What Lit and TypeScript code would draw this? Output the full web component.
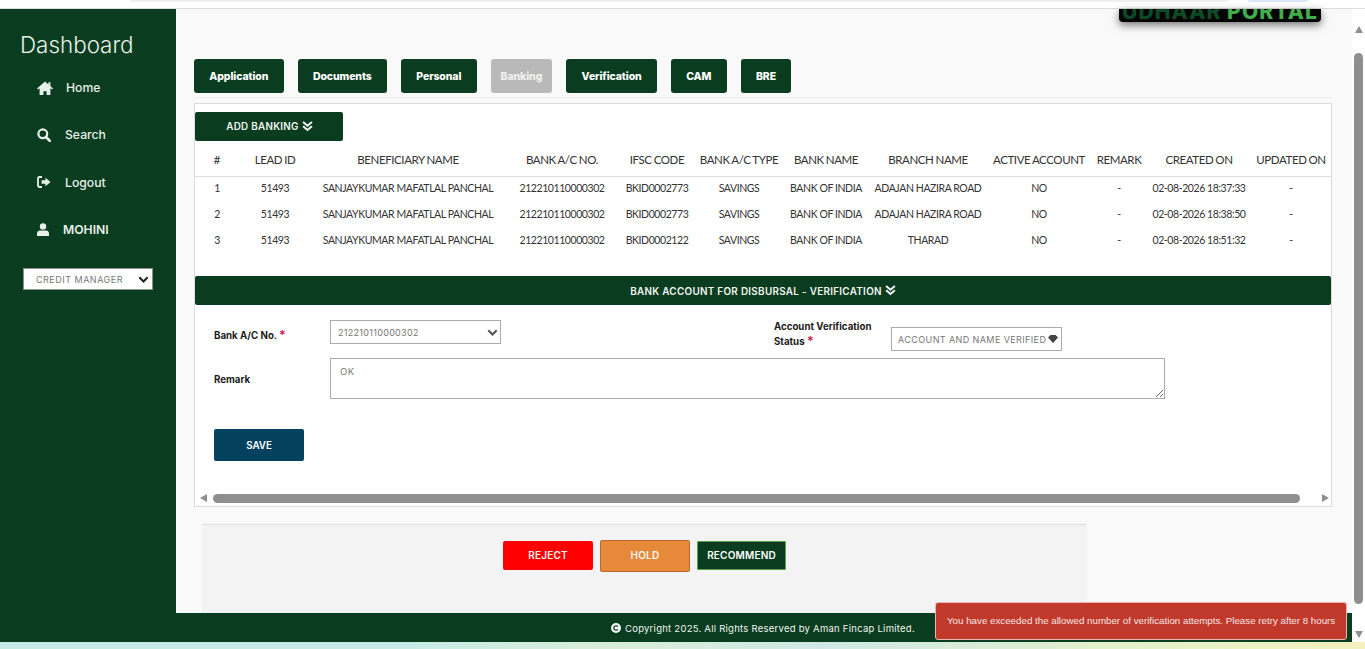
import { LitElement, css, html, svg } from "lit";
import { customElement } from "lit/decorators.js";

const HEAD = [
  "#",
  "LEAD ID",
  "BENEFICIARY NAME",
  "BANK A/C NO.",
  "IFSC CODE",
  "BANK A/C TYPE",
  "BANK NAME",
  "BRANCH NAME",
  "ACTIVE ACCOUNT",
  "REMARK",
  "CREATED ON",
  "UPDATED ON",
];

const WIDTHS = [44, 72, 194, 114, 76, 88, 86, 118, 104, 56, 104, 80];

const ROWS = [
  ["1", "51493", "SANJAYKUMAR MAFATLAL PANCHAL", "212210110000302", "BKID0002773", "SAVINGS", "BANK OF INDIA", "ADAJAN HAZIRA ROAD", "NO", "-", "02-08-2026 18:37:33", "-"],
  ["2", "51493", "SANJAYKUMAR MAFATLAL PANCHAL", "212210110000302", "BKID0002773", "SAVINGS", "BANK OF INDIA", "ADAJAN HAZIRA ROAD", "NO", "-", "02-08-2026 18:38:50", "-"],
  ["3", "51493", "SANJAYKUMAR MAFATLAL PANCHAL", "212210110000302", "BKID0002122", "SAVINGS", "BANK OF INDIA", "THARAD", "NO", "-", "02-08-2026 18:51:32", "-"],
];

const TABS = ["Application", "Documents", "Personal", "Banking", "Verification", "CAM", "BRE"];

const doubleDown = svg`<svg class="dbl" viewBox="0 0 12 12" width="11" height="11"><path d="M1.2 1.2 6 5.2l4.8-4M1.2 5.8 6 9.8l4.8-4" fill="none" stroke="currentColor" stroke-width="2.2"/></svg>`;

const chevron = svg`<svg class="chev" viewBox="0 0 12 8" width="11" height="7"><path d="M1.2 1.5 6 6.2l4.8-4.7" fill="none" stroke="currentColor" stroke-width="2.4"/></svg>`;

const NAV = [
  {
    label: "Home",
    cls: "home",
    icon: svg`<svg viewBox="0 0 16 14" width="16" height="14"><path fill="currentColor" d="M8 .4 0 7.4l1 1.2 1.6-1.3V14h3.8v-3.8h3.2V14h3.8V7.3l1.6 1.3 1-1.2-2.6-2.3V1.2h-2v2.4z"/></svg>`,
  },
  {
    label: "Search",
    cls: "search",
    icon: svg`<svg viewBox="0 0 14 14" width="14" height="14"><circle cx="5.8" cy="5.8" r="4.4" fill="none" stroke="currentColor" stroke-width="2.2"/><path d="m9 9 4 4" stroke="currentColor" stroke-width="2.6" stroke-linecap="round"/></svg>`,
  },
  {
    label: "Logout",
    cls: "logout",
    icon: svg`<svg viewBox="0 0 14 12" width="14" height="12"><path fill="none" stroke="currentColor" stroke-width="1.8" d="M5 1H2.4C1.6 1 1 1.6 1 2.4v7.2c0 .8.6 1.4 1.4 1.4H5"/><path fill="currentColor" d="M8.4 1.8 13.6 6l-5.2 4.2V7.8H4.6V4.2h3.8z"/></svg>`,
  },
  {
    label: "MOHINI",
    cls: "user",
    icon: svg`<svg viewBox="0 0 12 13" width="12" height="13"><circle cx="6" cy="3.4" r="3.2" fill="currentColor"/><path fill="currentColor" d="M0 13v-2.4C0 8.6 1.4 7.4 3 7.4h6c1.6 0 3 1.2 3 3.2V13z"/></svg>`,
  },
];

@customElement("app-root")
export class AppRoot extends LitElement {
  static styles = css`
    :host {
      display: block;
      width: 1365px;
      height: 649px;
      overflow: hidden;
      position: relative;
      background: #fff;
      font-family: "Inter", "Liberation Sans", sans-serif;
    }

    .chrome {
      height: 8px;
      background: #fff;
      border-bottom: 1px solid #dedede;
      display: flex;
      align-items: flex-start;
      gap: 20px;
      padding-left: 130px;
      box-sizing: content-box;
    }
    .chrome .pill {
      width: 1098px;
      height: 2px;
      background: #efefef;
      border-radius: 0 0 6px 6px;
    }
    .chrome .pill.blue {
      width: 60px;
      background: #dce8fa;
    }

    .shell {
      display: flex;
      height: 633px;
    }

    .side {
      width: 176px;
      flex: none;
      background: #0a3d1f;
      color: #e8f0ea;
      display: flex;
      flex-direction: column;
    }
    .brand {
      font-size: 22.4px;
      font-weight: 300;
      line-height: 28px;
      padding: 22px 0 0 20px;
    }
    .nav {
      display: flex;
      flex-direction: column;
      margin-top: 5px;
    }
    .nav-item {
      height: 47.33px;
      display: flex;
      align-items: center;
      padding-left: 37px;
      font-size: 12.2px;
      font-weight: 500;
      color: #e8f0ea;
    }
    .nav-item svg {
      display: block;
    }
    .nav-item .ico {
      width: 29px;
      flex: none;
    }
    .nav-item.search .ico,
    .nav-item.logout .ico {
      width: 28px;
    }
    .nav-item.user .ico {
      width: 26px;
    }
    .nav-item.user {
      font-weight: 600;
    }
    .role {
      position: relative;
      margin: 15px 0 0 23px;
      width: 130px;
      height: 22px;
    }
    .role select {
      appearance: none;
      display: block;
      width: 100%;
      height: 100%;
      box-sizing: border-box;
      border: 1px solid #8f8f8f;
      border-radius: 0;
      background: #fff;
      color: #777;
      font: 400 9px "Inter", sans-serif;
      letter-spacing: 0.5px;
      padding: 0 0 0 12px;
    }
    .chev {
      position: absolute;
      color: #555;
      pointer-events: none;
    }
    .role .chev {
      right: 4px;
      top: 8px;
      color: #222;
    }

    .center {
      flex: 1;
      display: flex;
      flex-direction: column;
      min-width: 0;
    }

    .work {
      flex: none;
      height: 604px;
      background: #f9f9f9;
      position: relative;
      display: flex;
      flex-direction: column;
      padding-left: 18px;
      box-sizing: border-box;
    }

    .logo {
      position: absolute;
      top: 0;
      left: 943px;
      width: 202px;
      height: 13px;
      background: #050505;
      border-radius: 0 0 4px 4px;
      box-shadow: 0 3px 8px rgba(0, 0, 0, 0.55);
      overflow: hidden;
      white-space: nowrap;
      font: 800 21px/13px "Inter", sans-serif;
      letter-spacing: 1.1px;
      text-align: center;
      color: #0f4a27;
    }
    .logo span {
      display: block;
      margin-top: -4px;
    }
    .logo b {
      color: #41ad4b;
      font-weight: 800;
    }

    .tabs {
      display: flex;
      gap: 14px;
      margin-top: 50px;
      padding-bottom: 4px;
      border-bottom: 1px solid #ececec;
      width: 1138px;
    }
    .tab {
      height: 34px;
      padding: 0 15.3px;
      border: 0;
      border-radius: 3px;
      background: #0a3d1f;
      color: #fff;
      font: 800 10.5px "Inter", sans-serif;
      letter-spacing: -0.1px;
    }
    .tab.off {
      padding: 0 10px;
      background: #b9b9b9;
      color: #f1f1f1;
    }

    .card {
      width: 1138px;
      height: 404px;
      margin-top: 5px;
      box-sizing: border-box;
      border: 1px solid #dcdcdc;
      background: #fff;
      display: flex;
      flex-direction: column;
      padding-top: 8px;
    }
    .add {
      width: 148px;
      height: 29px;
      border: 0;
      border-radius: 2px;
      background: #0a3d1f;
      color: #f2f5f2;
      font: 600 9.8px "Inter", sans-serif;
      letter-spacing: 0.3px;
      display: flex;
      align-items: center;
      justify-content: center;
      gap: 3px;
      padding: 0 0 0 1px;
    }

    table {
      table-layout: fixed;
      border-collapse: collapse;
      width: 1136px;
      font-family: "Lato", sans-serif;
      color: #333;
    }
    th {
      height: 35px;
      padding: 3px 0 0;
      box-sizing: border-box;
      font-size: 11.5px;
      font-weight: 400;
      letter-spacing: -0.4px;
      word-spacing: -0.5px;
      white-space: nowrap;
      border-bottom: 1px solid #dcdcdc;
      text-align: center;
    }
    td {
      height: 26px;
      padding: 0 0 2px;
      box-sizing: border-box;
      font-size: 10.5px;
      letter-spacing: -0.42px;
      white-space: nowrap;
      text-align: center;
    }

    .section {
      margin-top: 22px;
      height: 29px;
      flex: none;
      border-radius: 2px;
      background: #0a3d1f;
      color: #f2f5f2;
      font: 600 9.9px "Inter", sans-serif;
      letter-spacing: 0.3px;
      display: flex;
      align-items: center;
      justify-content: center;
      gap: 3px;
    }

    .form {
      display: grid;
      grid-template-columns: 116px 171px 273px 117px 171px;
      grid-template-rows: 32px auto;
      row-gap: 7px;
      padding: 14px 0 0 19px;
      font-size: 9.7px;
      font-weight: 700;
      color: #1c1c1c;
    }
    .form label {
      align-self: center;
      line-height: 15px;
      padding-top: 1px;
    }
    .form label.top {
      align-self: start;
      padding-top: 0;
    }
    .req {
      color: #e0134f;
      font-size: 12px;
      line-height: 10px;
    }
    .pick {
      position: relative;
      height: 24px;
      width: 171px;
    }
    .pick.first {
      margin-top: 1px;
    }
    .pick.last {
      align-self: end;
    }
    .pick select {
      appearance: none;
      display: block;
      width: 100%;
      height: 100%;
      box-sizing: border-box;
      border: 1px solid #ababab;
      border-radius: 0;
      background: #fff;
      color: #777;
      font: 400 9px "Inter", sans-serif;
      letter-spacing: 0.3px;
      padding: 1px 0 0 7px;
    }
    .pick.last select {
      letter-spacing: 0.4px;
      padding: 0 0 0 6px;
    }
    .pick .chev {
      right: 3px;
      top: 9px;
    }
    .pick .stack {
      position: absolute;
      right: 4px;
      top: 8px;
      color: #444;
    }
    .remark {
      grid-column: 2 / -1;
      width: 835px;
      height: 41px;
      box-sizing: border-box;
      display: block;
      border: 1px solid #ababab;
      border-radius: 0;
      padding: 7px 9px 5px;
      color: #777;
      font: 400 9.5px "Inter", sans-serif;
      letter-spacing: 0.5px;
      resize: both;
      outline: 0;
    }

    .save {
      width: 90px;
      height: 32px;
      margin: 30px 0 0 19px;
      padding: 1px 0 0;
      border: 0;
      border-radius: 2px;
      background: #04415f;
      color: #fff;
      font: 600 9.8px "Inter", sans-serif;
      flex: none;
    }

    .hbar {
      margin-top: auto;
      height: 10px;
      margin-bottom: 3px;
      display: flex;
      align-items: center;
      padding: 0 2px 0 5px;
      gap: 6px;
    }
    .arrow {
      flex: none;
      width: 0;
      height: 0;
      border-style: solid;
      border-color: transparent;
    }
    .arrow.left {
      border-width: 4.5px 7px 4.5px 0;
      border-right-color: #8f8f8f;
    }
    .arrow.right {
      border-width: 4.5px 0 4.5px 7px;
      border-left-color: #8f8f8f;
      margin-left: 16px;
    }
    .thumb {
      height: 9px;
      flex: 1;
      border-radius: 5px;
      background: #8f8f8f;
    }

    .actions {
      width: 885px;
      height: 89px;
      margin: 17px 0 0 8px;
      box-sizing: border-box;
      border-top: 1px solid #dedede;
      background: #f3f3f3;
      display: flex;
      align-items: flex-start;
      gap: 7px;
      padding: 15px 0 0 301px;
    }
    .act {
      width: 90px;
      height: 29px;
      margin-top: 1px;
      padding: 0 0 2px;
      box-sizing: border-box;
      border: 0;
      border-radius: 2px;
      color: #f5f5f5;
      font: 600 10px "Inter", sans-serif;
      letter-spacing: 0.2px;
    }
    .act.reject {
      background: #ff0000;
    }
    .act.hold {
      height: 32px;
      margin-top: 0;
      padding-bottom: 2px;
      background: #e68a3a;
      border: 1px solid #b8682a;
    }
    .act.rec {
      width: 89px;
      background: #0a3d1f;
      border: 1px solid #5d9e4a;
      border-radius: 1px;
      color: #fff;
    }

    footer {
      flex: none;
      height: 29px;
      box-sizing: border-box;
      padding: 1px 0 0 435px;
      background: #0a3d1f;
      color: #f0f4f0;
      display: flex;
      align-items: center;
      gap: 4px;
      font: 400 9.5px "Inter", sans-serif;
      letter-spacing: 0.25px;
    }

    .vbar {
      width: 13px;
      flex: none;
      background: #fff;
      display: flex;
      flex-direction: column;
      align-items: center;
      padding: 17px 0 4px;
      box-sizing: border-box;
      position: relative;
    }
    .vbar .up,
    .vbar .down {
      width: 0;
      height: 0;
      border-style: solid;
      border-color: transparent;
      flex: none;
    }
    .vbar .up {
      border-width: 0 4.5px 7px;
      border-bottom-color: #8f8f8f;
    }
    .vbar .grip {
      flex: none;
      width: 9px;
      height: 551px;
      margin-top: 20px;
      border-radius: 5px;
      background: #8f8f8f;
    }
    .vbar .down {
      margin-top: auto;
      border-width: 7px 4.5px 0;
      border-top-color: #8f8f8f;
    }

    .wash {
      height: 7px;
      background: linear-gradient(90deg, #c4ebe6 0%, #c7ebe6 30%, #d9eed8 45%, #cfe8e4 60%, #e6f1c8 85%, #f4f0bf 100%);
    }

    .toast {
      position: absolute;
      left: 935px;
      top: 602px;
      width: 412px;
      height: 38px;
      box-sizing: border-box;
      display: flex;
      align-items: center;
      padding: 0 0 2px 11px;
      border: 1px solid #e7b7b0;
      border-radius: 3px;
      background: #c0392b;
      color: #f6e6e3;
      font: 400 9.75px "Liberation Sans", sans-serif;
      white-space: nowrap;
    }
  `;

  render() {
    return html`
      <div class="chrome">
        <div class="pill"></div>
        <div class="pill blue"></div>
      </div>
      <div class="shell">
        <aside class="side">
          <div class="brand">Dashboard</div>
          <nav class="nav">
            ${NAV.map(
              (n) => html`<div class="nav-item ${n.cls}"><span class="ico">${n.icon}</span>${n.label}</div>`,
            )}
          </nav>
          <div class="role">
            <select><option>CREDIT MANAGER</option></select>
            ${chevron}
          </div>
        </aside>

        <div class="center">
          <main class="work">
            <div class="logo"><span>UDHAAR <b>PORTAL</b></span></div>
            <div class="tabs">
              ${TABS.map((t) => html`<button class="tab ${t === "Banking" ? "off" : ""}">${t}</button>`)}
            </div>
            <section class="card">
              <button class="add">ADD BANKING ${doubleDown}</button>
              <table>
                <colgroup>
                  ${WIDTHS.map((w) => html`<col style="width:${w}px" />`)}
                </colgroup>
                <thead>
                  <tr>${HEAD.map((h) => html`<th>${h}</th>`)}</tr>
                </thead>
                <tbody>
                  ${ROWS.map((r) => html`<tr>${r.map((c) => html`<td>${c}</td>`)}</tr>`)}
                </tbody>
              </table>
              <div class="section">BANK ACCOUNT FOR DISBURSAL - VERIFICATION ${doubleDown}</div>
              <div class="form">
                <label>Bank A/C No. <span class="req">*</span></label>
                <div class="pick first">
                  <select><option>212210110000302</option></select>
                  ${chevron}
                </div>
                <div></div>
                <label class="top">Account Verification<br />Status <span class="req">*</span></label>
                <div class="pick last">
                  <select><option>ACCOUNT AND NAME VERIFIED</option></select>
                  <svg class="stack" viewBox="0 0 10 8" width="10" height="8">
                    <path fill="currentColor" d="M0 2.4 2.4 0h5.2L10 2.4 5 8z" />
                  </svg>
                </div>
                <label>Remark</label>
                <textarea class="remark">OK</textarea>
              </div>
              <button class="save">SAVE</button>
              <div class="hbar">
                <span class="arrow left"></span>
                <span class="thumb"></span>
                <span class="arrow right"></span>
              </div>
            </section>
            <div class="actions">
              <button class="act reject">REJECT</button>
              <button class="act hold">HOLD</button>
              <button class="act rec">RECOMMEND</button>
            </div>
          </main>
          <footer>
            <svg viewBox="0 0 10 10" width="10" height="10">
              <circle cx="5" cy="5" r="5" fill="currentColor" />
              <path d="M6.8 3.7A2.2 2.2 0 1 0 6.8 6.3" fill="none" stroke="#0a3d1f" stroke-width="1.3" />
            </svg>
            <span>Copyright 2025. All Rights Reserved by Aman Fincap Limited.</span>
          </footer>
        </div>

        <div class="vbar">
          <span class="up"></span>
          <span class="grip"></span>
          <span class="down"></span>
        </div>
      </div>
      <div class="wash"></div>
      <div class="toast">You have exceeded the allowed number of verification attempts. Please retry after 8 hours</div>
    `;
  }
}
